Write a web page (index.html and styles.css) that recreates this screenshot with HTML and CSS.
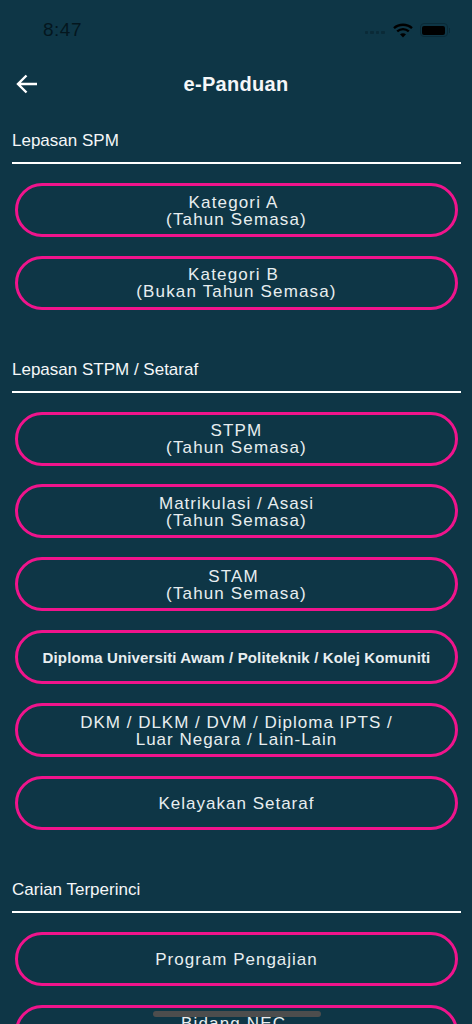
FILE: index.html
```html
<!DOCTYPE html>
<html>
<head>
  <meta charset="UTF-8">
  <meta name="viewport" content="width=device-width, initial-scale=1.0">
  <title>e-Panduan</title>
  <link rel="stylesheet" href="styles.css">
</head>
<body>
  <div class="screen">
    <div class="status-bar">
      <span class="time">8:47</span>
      <div class="status-icons">
        <div class="signal"><i></i><i></i><i></i><i></i></div>
        <svg class="wifi" width="20" height="15" viewBox="0 0 20 15">
          <path d="M1 5.2C6 .6 14 .6 19 5.2" fill="none" stroke="#000" stroke-width="2.4"/>
          <path d="M4.2 8.4c3.4-3 8.2-3 11.6 0" fill="none" stroke="#000" stroke-width="2.4"/>
          <path d="M7 11.2c1.8-1.4 4.2-1.4 6 0l-3 3.3z" fill="#000"/>
        </svg>
        <div class="battery"><div class="battery-fill"></div></div>
        <div class="battery-cap"></div>
      </div>
    </div>

    <div class="nav-bar">
      <svg class="back" width="22" height="20" viewBox="0 0 22 20">
        <path d="M21 10H2M10.500 1.500 2 10l8.500 8.500" fill="none" stroke="#fff" stroke-width="2.400"/>
      </svg>
      <h1>e-Panduan</h1>
    </div>

    <div class="section">
      <h2>Lepasan SPM</h2>
      <div class="list">
        <a class="pill">Kategori A&nbsp;<br>(Tahun Semasa)</a>
        <a class="pill">Kategori B&nbsp;<br>(Bukan Tahun Semasa)</a>
      </div>
    </div>

    <div class="section">
      <h2>Lepasan STPM / Setaraf</h2>
      <div class="list">
        <a class="pill">STPM<br>(Tahun Semasa)</a>
        <a class="pill"><span><span class="line-tight">Matrikulasi / Asasi</span><br>(Tahun Semasa)</span></a>
        <a class="pill">STAM&nbsp;<br>(Tahun Semasa)</a>
        <a class="pill pill-small">Diploma Universiti Awam / Politeknik / Kolej Komuniti</a>
        <a class="pill pill-tight">DKM / DLKM / DVM / Diploma IPTS /<br>Luar Negara / Lain-Lain</a>
        <a class="pill pill-tight">Kelayakan Setaraf</a>
      </div>
    </div>

    <div class="section">
      <h2>Carian Terperinci</h2>
      <div class="list">
        <a class="pill pill-tight">Program Pengajian</a>
        <a class="pill">Bidang NEC&nbsp;<br>&nbsp;</a>
      </div>
    </div>

    <div class="home-bar"></div>
  </div>
</body>
</html>
```

FILE: styles.css
```css
html, body {
  margin: 0;
  padding: 0;
}
body {
  font-family: "Liberation Sans", Arial, sans-serif;
  background: #0e3646;
  color: #fff;
}
.screen {
  position: relative;
  height: 1024px;
  overflow: hidden;
  background: #0e3646;
}
.status-bar {
  height: 60px;
  display: flex;
  align-items: center;
  justify-content: space-between;
  padding: 0 22px 0 43px;
  box-sizing: border-box;
}
.time {
  font-size: 19px;
  color: #04161e;
  letter-spacing: 0.5px;
}
.status-icons {
  display: flex;
  align-items: center;
}
.signal {
  display: flex;
  gap: 2px;
  margin-top: 5px;
  margin-right: 8px;
}
.signal i {
  width: 3.500px;
  height: 3.500px;
  border-radius: 1px;
  background: #0a2a37;
}
.wifi {
  margin-right: 7px;
}
.battery {
  width: 28px;
  height: 14px;
  box-sizing: border-box;
  border: 1px solid #0a2a37;
  border-radius: 4px;
  padding: 1.500px;
}
.battery-fill {
  height: 100%;
  background: #000;
  border-radius: 2px;
}
.battery-cap {
  width: 1.500px;
  height: 5px;
  margin-left: 1px;
  background: #0a2a37;
}
.nav-bar {
  position: relative;
  height: 48px;
  display: flex;
  align-items: center;
  justify-content: center;
}
.nav-bar h1 {
  margin: 0;
  font-size: 20px;
  font-weight: bold;
  letter-spacing: 0.3px;
  color: #f5f7f8;
}
.back {
  position: absolute;
  left: 16px;
  top: 14px;
}
.section {
  padding: 0 11px 0 12px;
  margin-bottom: 49.700px;
}
.section:nth-child(4) {
  margin-bottom: 49.900px;
}
.section h2 {
  margin: 0;
  padding: 23px 0 12px;
  font-size: 17px;
  line-height: 19px;
  font-weight: normal;
  color: #f5f7f8;
  border-bottom: 2px solid #fff;
}
.section + .section h2 {
  padding-top: 0;
}
.list {
  display: flex;
  flex-direction: column;
  gap: 18.900px;
  padding: 19px 3px 0;
}
.pill {
  display: flex;
  align-items: center;
  justify-content: center;
  height: 54px;
  box-sizing: border-box;
  border: 3px solid #f0148c;
  border-radius: 27px;
  padding-top: 1px;
  font-size: 17px;
  line-height: 17px;
  letter-spacing: 1.150px;
  text-align: center;
  color: #e8eef0;
}
.pill-tight, .line-tight {
  letter-spacing: 1px;
}
.pill-small {
  font-size: 15px;
  font-weight: bold;
  letter-spacing: 0.130px;
}
.home-bar {
  position: absolute;
  left: 153px;
  top: 1011px;
  width: 168px;
  height: 6px;
  border-radius: 3px;
  background: #4d4d4d;
}
```
